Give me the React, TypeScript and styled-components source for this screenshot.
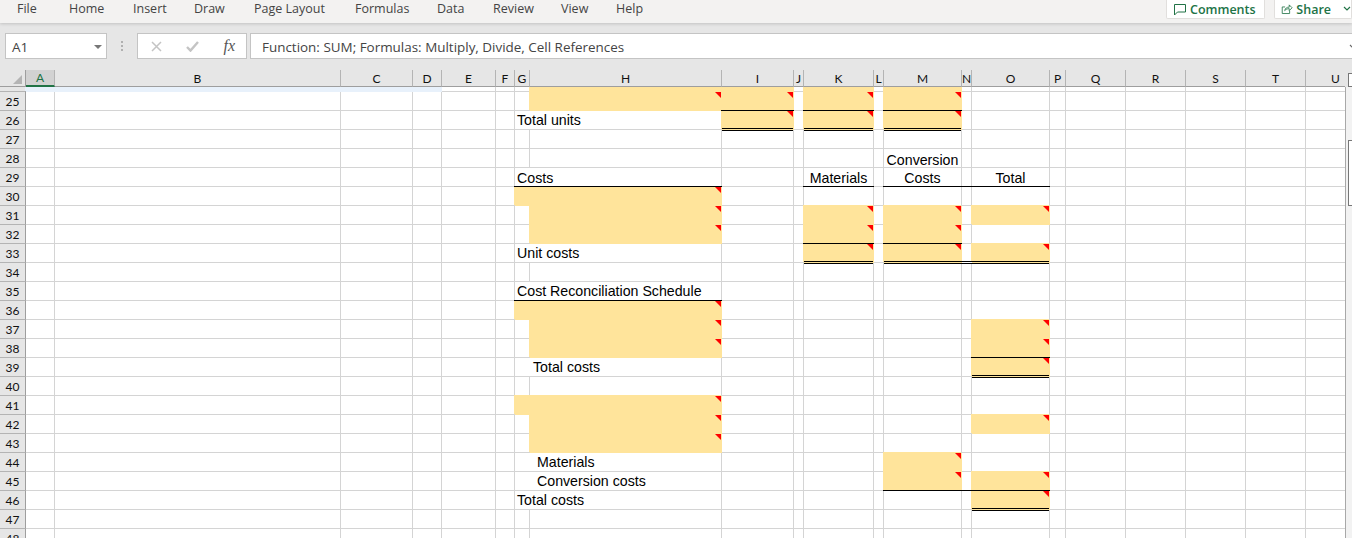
import { FC, Fragment } from "react";
import styled, { createGlobalStyle } from "styled-components";

const GRID_LINE = "#d4d4d4";
const INPUT_FILL = "#ffe49b";
const HEADER_BG = "#e6e6e6";
const GREEN = "#217346";

const GlobalStyle = createGlobalStyle`
  html, body {
    margin: 0;
    height: 100%;
    overflow: hidden;
    background: #fff;
  }
  #root {
    height: 100%;
  }
`;

const Page = styled.div`
  display: flex;
  flex-direction: column;
  height: 538px;
  overflow: hidden;
  background: ${HEADER_BG};
  font-family: "Open Sans", "Noto Sans", sans-serif;
`;

const Ribbon = styled.div`
  display: flex;
  align-items: flex-start;
  justify-content: space-between;
  height: 23px;
  padding-left: 17px;
  background: #f3f2f1;
  box-shadow: 0 1px 3px rgba(0, 0, 0, 0.16);
`;

const Tabs = styled.nav`
  display: flex;
`;

const Tab = styled.span<{ $width: number }>`
  width: ${(p) => p.$width}px;
  font-size: 12.5px;
  line-height: 17px;
  color: #444;
`;

const RibbonActions = styled.div`
  display: flex;
  gap: 9px;
`;

const RibbonButton = styled.div<{ $width: number }>`
  display: flex;
  align-items: center;
  gap: 3px;
  box-sizing: border-box;
  width: ${(p) => p.$width}px;
  height: 19px;
  padding-left: 6px;
  background: #fff;
  border: 1px solid #e1dfdd;
  border-top: 0;
  border-radius: 0 0 2px 2px;
  color: ${GREEN};
  font-size: 12.5px;
  font-weight: 600;
`;

const ShareCaret = styled.span`
  display: flex;
  margin-left: 9px;
`;

const FormulaBar = styled.div`
  display: flex;
  align-items: stretch;
  height: 26px;
  padding: 10px 0 11px 5px;
`;

const FieldBox = styled.div`
  display: flex;
  align-items: center;
  box-sizing: border-box;
  height: 26px;
  background: #fff;
  border: 1px solid #c4c4c4;
`;

const NameBox = styled(FieldBox)`
  justify-content: space-between;
  width: 102px;
  padding: 1px 4px 0 6px;
  font-size: 13.5px;
  color: #444;
`;

const Caret = styled.span`
  width: 0;
  height: 0;
  border-left: 4px solid transparent;
  border-right: 4px solid transparent;
  border-top: 4px solid #777;
`;

const Grip = styled.div`
  display: flex;
  flex-direction: column;
  align-items: center;
  justify-content: center;
  gap: 2px;
  width: 30px;
  i {
    width: 2px;
    height: 2px;
    background: #b0b0b0;
  }
`;

const EditButtons = styled(FieldBox)`
  justify-content: space-between;
  width: 110px;
  padding: 0 11px 0 13px;
  margin-right: 3px;
`;

const FxLabel = styled.span`
  font-family: "Liberation Serif", serif;
  font-style: italic;
  font-size: 16px;
  color: #555;
`;

const FormulaInput = styled(FieldBox)`
  flex: 1;
  justify-content: space-between;
  padding: 1px 0 0 11px;
  border-right: 0;
  font-size: 13.45px;
  color: #444;
  overflow: hidden;
`;

const FormulaCaret = styled.span`
  display: flex;
  margin-right: -5px;
`;

const SheetArea = styled.div`
  display: flex;
  flex: 1;
  min-height: 0;
`;

const GridClip = styled.div`
  width: 1345px;
  overflow: hidden;
  background: #fff;
`;

const Grid = styled.div<{ $columns: number[]; $rows: number[] }>`
  display: grid;
  grid-template-columns: ${(p) => p.$columns.map((c) => `${c}px`).join(" ")};
  grid-template-rows: ${(p) => p.$rows.map((r) => `${r}px`).join(" ")};
`;

const Corner = styled.div`
  position: relative;
  z-index: 2;
  box-sizing: border-box;
  background: ${HEADER_BG};
  border-right: 1px solid #9e9e9e;
  border-bottom: 1px solid #9e9e9e;
  &::after {
    content: "";
    position: absolute;
    right: 3px;
    bottom: 2px;
    border-left: 9px solid transparent;
    border-bottom: 9px solid #b4b4b4;
  }
`;

const ColumnHeader = styled.div<{ $active?: boolean }>`
  position: relative;
  z-index: 2;
  display: flex;
  align-items: center;
  justify-content: center;
  box-sizing: border-box;
  background: ${(p) => (p.$active ? "#d2d2d2" : HEADER_BG)};
  border-right: 1px solid #b4b4b4;
  border-bottom: ${(p) => (p.$active ? `2px solid ${GREEN}` : "1px solid #9e9e9e")};
  color: ${(p) => (p.$active ? GREEN : "#111")};
  font-family: Lato, sans-serif;
  font-size: 12px;
`;

const RowHeader = styled.div`
  display: flex;
  align-items: flex-end;
  justify-content: center;
  box-sizing: border-box;
  overflow: hidden;
  background: ${HEADER_BG};
  border-right: 1px solid #9e9e9e;
  border-bottom: 1px solid #b4b4b4;
  color: #111;
  font-family: Lato, sans-serif;
  font-size: 12px;
  line-height: 16px;
`;

type Rule = "single" | "double";

const Cell = styled.div<{
  $fill?: string;
  $span?: number;
  $align?: string;
  $indent?: number;
  $nudge?: number;
  $top?: boolean;
  $bottom?: Rule;
  $joined?: boolean;
}>`
  position: relative;
  box-sizing: border-box;
  grid-column: span ${(p) => p.$span ?? 1};
  padding: ${(p) => p.$nudge ?? 0}px 0 0 ${(p) => p.$indent ?? (p.$align === "center" ? 0 : 2)}px;
  background: ${(p) => p.$fill ?? "transparent"};
  border-right: 1px solid ${(p) => p.$fill ?? GRID_LINE};
  border-bottom: 1px solid ${(p) => p.$fill ?? GRID_LINE};
  box-shadow: ${(p) => (p.$fill ? `-1px -1px 0 ${p.$fill}` : "none")};
  color: #000;
  font-family: "Liberation Sans", Arial, sans-serif;
  font-size: 14.2px;
  line-height: 18px;
  text-align: ${(p) => p.$align ?? "left"};
  white-space: nowrap;

  &::before {
    content: ${(p) => (p.$top ? '""' : "none")};
    position: absolute;
    z-index: 1;
    top: -1px;
    left: -1px;
    right: -1px;
    height: 1px;
    background: #000;
  }

  &::after {
    content: ${(p) => (p.$bottom ? '""' : "none")};
    position: absolute;
    z-index: 1;
    box-sizing: border-box;
    ${(p) =>
      p.$bottom === "double"
        ? `
      left: 0;
      right: ${p.$joined ? "-1px" : "0"};
      bottom: -2px;
      height: 3px;
      background: ${p.$fill ?? "#fff"};
      border-top: 1px solid #000;
      border-bottom: 1px solid #000;
    `
        : `
      left: -1px;
      right: -1px;
      bottom: -1px;
      height: 1px;
      background: #000;
    `}
  }
`;

const Note = styled.span`
  position: absolute;
  z-index: 1;
  top: 0;
  right: 0;
  border-top: 6px solid #f00;
  border-left: 6px solid transparent;
`;

const Scrollbar = styled.div`
  position: relative;
  flex: 1;
  background: ${HEADER_BG};

  &::before {
    content: "";
    position: absolute;
    top: 17px;
    bottom: 0;
    left: 0;
    right: 0;
    background: #f2f2f2;
    border-left: 1px solid #a8a8a8;
  }
`;

const ScrollUp = styled.div`
  position: relative;
  box-sizing: border-box;
  height: 14px;
  margin: 3px 0 0 3px;
  background: #fff;
  border: 1px solid #777;
  border-right: 0;
`;

const ScrollThumb = styled.div`
  position: relative;
  box-sizing: border-box;
  height: 66px;
  margin: 53px 0 0 3px;
  background: #fff;
  border: 1px solid #777;
  border-right: 0;
`;

const COLUMNS: [string, number][] = [
  ["A", 29], ["B", 286], ["C", 72], ["D", 29], ["E", 54], ["F", 19], ["G", 15],
  ["H", 192], ["I", 72], ["J", 10], ["K", 70], ["L", 10], ["M", 78], ["N", 10],
  ["O", 78], ["P", 16], ["Q", 60], ["R", 60], ["S", 60], ["T", 60], ["U", 60],
];

const FIRST_ROW = 24;
const LAST_ROW = 48;

type Spec = {
  input?: boolean;
  selected?: boolean;
  span?: number;
  text?: string;
  align?: string;
  indent?: number;
  nudge?: number;
  top?: boolean;
  bottom?: Rule;
  joined?: boolean;
  note?: boolean;
};

const input = (extra: Spec = {}): Spec => ({ input: true, note: true, ...extra });
const total = (extra: Spec = {}): Spec => input({ top: true, bottom: "double", ...extra });
const label = (text: string, extra: Spec = {}): Spec => ({ text, span: 2, ...extra });

const CELLS: Record<number, Record<string, Spec>> = {
  24: {
    A: { selected: true, span: 4 },
    H: { input: true },
    I: { input: true },
    K: { input: true },
    M: { input: true },
  },
  25: { H: input(), I: input(), K: input(), M: input() },
  26: { G: label("Total units"), I: total(), K: total(), M: total() },
  28: { M: { text: "Conversion", align: "center", nudge: 2 } },
  29: {
    G: label("Costs", { bottom: "single", nudge: 1 }),
    K: { text: "Materials", align: "center", bottom: "single", nudge: 1 },
    M: { text: "Costs", align: "center", bottom: "single", nudge: 1 },
    N: { bottom: "single" },
    O: { text: "Total", align: "center", bottom: "single", nudge: 1 },
  },
  30: { G: input({ span: 2 }) },
  31: { H: input(), K: input(), M: input(), O: input() },
  32: { H: input(), K: input(), M: input() },
  33: {
    G: label("Unit costs"),
    K: total(),
    M: total({ joined: true }),
    N: { bottom: "double", joined: true },
    O: total({ top: false }),
  },
  35: { G: label("Cost Reconciliation Schedule", { bottom: "single" }) },
  36: { G: input({ span: 2 }) },
  37: { H: input(), O: input() },
  38: { H: input(), O: input() },
  39: { G: label("Total costs", { indent: 18 }), O: total() },
  41: { G: input({ span: 2 }) },
  42: { H: input(), O: input() },
  43: { H: input() },
  44: { G: label("Materials", { indent: 22 }), M: input() },
  45: {
    G: label("Conversion costs", { indent: 22 }),
    M: input({ bottom: "single" }),
    N: { bottom: "single" },
    O: input({ bottom: "single" }),
  },
  46: { G: label("Total costs"), O: input({ bottom: "double" }) },
};

const rowNumbers = Array.from({ length: LAST_ROW - FIRST_ROW + 1 }, (_, i) => FIRST_ROW + i);

const renderRow = (row: number) => {
  const specs = CELLS[row] ?? {};
  const cells = [];
  for (let i = 0; i < COLUMNS.length; i++) {
    const name = COLUMNS[i][0];
    const spec = specs[name] ?? {};
    const fill = spec.input ? INPUT_FILL : spec.selected ? "#e8f1fb" : undefined;
    cells.push(
      <Cell
        key={name}
        $fill={fill}
        $span={spec.span}
        $align={spec.align}
        $indent={spec.indent}
        $nudge={spec.nudge}
        $top={spec.top}
        $bottom={spec.bottom}
        $joined={spec.joined}
      >
        {spec.text}
        {spec.note && <Note />}
      </Cell>
    );
    i += (spec.span ?? 1) - 1;
  }
  return cells;
};

const CommentIcon = () => (
  <svg width="14" height="13" viewBox="0 0 14 13" fill="none" stroke={GREEN} strokeWidth="1">
    <path d="M1.5 1.5h11v7.5h-8l-3 3z" />
  </svg>
);

const ShareIcon = () => (
  <svg width="15" height="14" viewBox="0 0 15 14" fill="none" stroke={GREEN} strokeWidth="1">
    <path d="M5 4.5H1.5v8h9V9" />
    <path d="M4.5 9c.4-2.8 2.6-4.3 5.5-4.3V2l3.5 3.5L10 9V6.6C7.8 6.6 6 7.2 4.5 9z" />
  </svg>
);

const ChevronDown: FC<{ color: string }> = ({ color }) => (
  <svg width="8" height="6" viewBox="0 0 8 6" fill="none" stroke={color} strokeWidth="1.2">
    <path d="M1 1l3 3 3-3" />
  </svg>
);

const CrossIcon = () => (
  <svg width="11" height="11" viewBox="0 0 11 11" fill="none" stroke="#c4c4c4" strokeWidth="1.5">
    <path d="M1 1l9 9M10 1l-9 9" />
  </svg>
);

const CheckIcon = () => (
  <svg width="13" height="11" viewBox="0 0 13 11" fill="none" stroke="#c4c4c4" strokeWidth="2.4">
    <path d="M1 6l3.5 3.6L12 1" />
  </svg>
);

const TABS: [string, number][] = [
  ["File", 52], ["Home", 64], ["Insert", 61], ["Draw", 60], ["Page Layout", 101],
  ["Formulas", 82], ["Data", 56], ["Review", 68], ["View", 55], ["Help", 40],
];

export default function App() {
  const columns = [26, ...COLUMNS.map((c) => c[1])];
  const rows = [17, 5, ...rowNumbers.slice(1).map(() => 19)];

  return (
    <Page>
      <GlobalStyle />
      <Ribbon>
        <Tabs>
          {TABS.map(([t, width]) => (
            <Tab key={t} $width={width}>
              {t}
            </Tab>
          ))}
        </Tabs>
        <RibbonActions>
          <RibbonButton $width={99}>
            <CommentIcon />
            Comments
          </RibbonButton>
          <RibbonButton $width={78}>
            <ShareIcon />
            Share
            <ShareCaret>
              <ChevronDown color={GREEN} />
            </ShareCaret>
          </RibbonButton>
        </RibbonActions>
      </Ribbon>
      <FormulaBar>
        <NameBox>
          A1
          <Caret />
        </NameBox>
        <Grip>
          <i />
          <i />
          <i />
        </Grip>
        <EditButtons>
          <CrossIcon />
          <CheckIcon />
          <FxLabel>fx</FxLabel>
        </EditButtons>
        <FormulaInput>
          Function: SUM; Formulas: Multiply, Divide, Cell References
          <FormulaCaret>
            <ChevronDown color="#666" />
          </FormulaCaret>
        </FormulaInput>
      </FormulaBar>
      <SheetArea>
        <GridClip>
          <Grid $columns={columns} $rows={rows}>
            <Corner />
            {COLUMNS.map(([name]) => (
              <ColumnHeader key={name} $active={name === "A"}>
                {name}
              </ColumnHeader>
            ))}
            {rowNumbers.map((row) => (
              <Fragment key={row}>
                <RowHeader>{row}</RowHeader>
                {renderRow(row)}
              </Fragment>
            ))}
          </Grid>
        </GridClip>
        <Scrollbar>
          <ScrollUp />
          <ScrollThumb />
        </Scrollbar>
      </SheetArea>
    </Page>
  );
}
